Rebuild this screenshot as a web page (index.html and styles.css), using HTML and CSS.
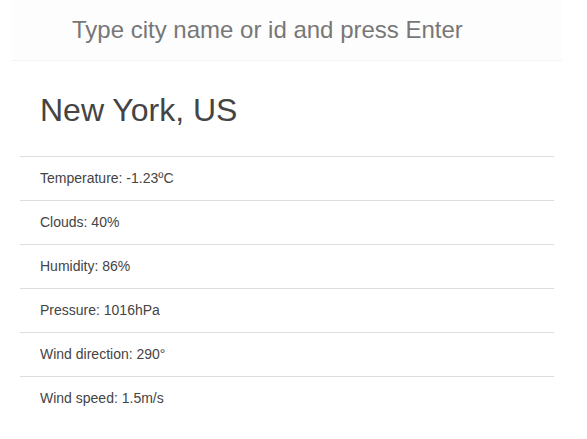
FILE: index.html
```html
<!DOCTYPE html>
<html>
<head>
<meta charset="utf-8">
<link rel="stylesheet" href="styles.css">
</head>
<body>
<div class="app">
  <div class="search">
    <input class="search-input" type="text" placeholder="Type city name or id and press Enter">
  </div>
  <div class="card">
    <h1 class="city">New York, US</h1>
    <ul class="stats">
      <li class="stat">Temperature: -1.23ºC</li>
      <li class="stat">Clouds: 40%</li>
      <li class="stat">Humidity: 86%</li>
      <li class="stat">Pressure: 1016hPa</li>
      <li class="stat">Wind direction: 290°</li>
      <li class="stat">Wind speed: 1.5m/s</li>
    </ul>
  </div>
</div>
</body>
</html>
```

FILE: styles.css
```css
html, body {
  margin: 0;
  padding: 0;
  background: #ffffff;
  font-family: "Liberation Sans", Arial, sans-serif;
  color: #444444;
}
.app {
  width: 550px;
  margin-left: 12px;
}
.search {
  background: #fdfdfd;
  border-bottom: 1px solid #f3f3f3;
  height: 60px;
  display: flex;
  align-items: center;
}
.search-input {
  width: 100%;
  height: 60px;
  box-sizing: border-box;
  border: none;
  outline: none;
  background: transparent;
  padding: 0 0 0 60px;
  font-family: "Liberation Sans", Arial, sans-serif;
  font-size: 24px;
  color: #444444;
}
.search-input::placeholder {
  color: #777777;
  opacity: 1;
}
.card {
  padding: 0 8px;
}
.city {
  margin: 0;
  padding: 30px 20px 27px 20px;
  font-size: 32px;
  font-weight: normal;
  line-height: 38px;
  color: #444444;
}
.stats {
  list-style: none;
  margin: 0;
  padding: 0;
}
.stat {
  border-top: 1px solid #dddddd;
  padding: 12px 20px 12px 20px;
  font-size: 14px;
  line-height: 19px;
  color: #444444;
}
```
